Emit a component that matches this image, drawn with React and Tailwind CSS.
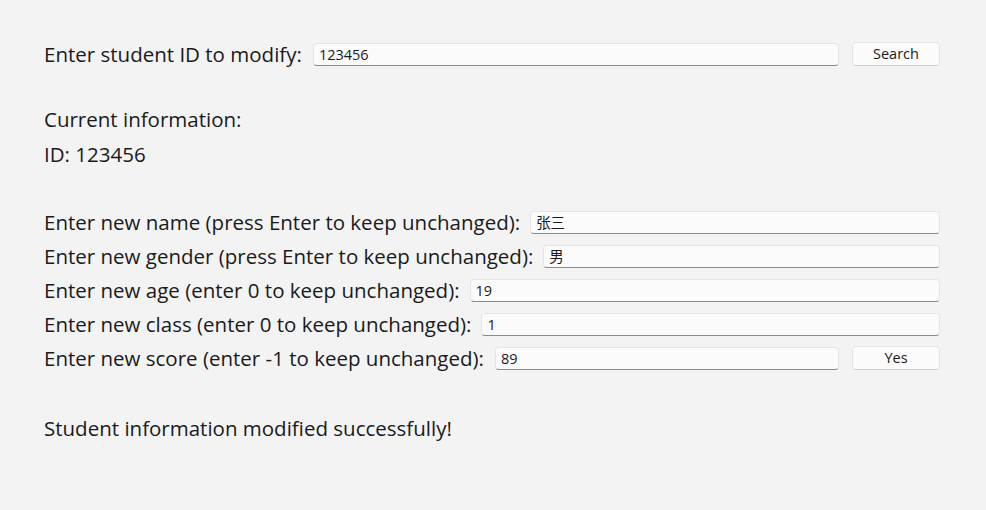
export default function App() {
  const rows = [
    { label: "Enter new name (press Enter to keep unchanged):", value: "张三" },
    { label: "Enter new gender (press Enter to keep unchanged):", value: "男" },
    { label: "Enter new age (enter 0 to keep unchanged):", value: "19" },
    { label: "Enter new class (enter 0 to keep unchanged):", value: "1" },
  ];

  const inputCls =
    "h-[23px] flex-1 rounded-[4px] border border-[#e5e5e5] border-b-[#8a8a8a] bg-[#fbfbfb] px-[5px] text-[14.5px] leading-[21px] text-[#1a1a1a]";
  const btnCls =
    "h-[24px] w-[88px] rounded-[4px] border border-[#e5e5e5] border-b-[#d0d0d0] bg-[#fbfbfb] text-[14.5px] text-[#1a1a1a]";

  return (
    <div
      className="h-[510px] w-[986px] bg-[#f3f3f3] pl-[44px] pr-[46px] pt-[42px] text-[#1a1a1a]"
      style={{ fontFamily: '"Open Sans", "Noto Sans CJK SC", sans-serif' }}
    >
      <div className="flex items-center">
        <span className="text-[20.5px] leading-[24px]">Enter student ID to modify:</span>
        <div className="ml-[11px] flex flex-1 items-center">
          <div className={inputCls}>123456</div>
          <button className={`ml-[13px] ${btnCls}`}>Search</button>
        </div>
      </div>

      <div className="mt-[36px] text-[20.5px] leading-[35px]">Current information:</div>
      <div className="text-[20.5px] leading-[35px]">ID: 123456</div>

      <div className="mt-[38px] flex flex-col gap-[10px]">
        {rows.map((r) => (
          <div key={r.label} className="flex items-center">
            <span className="text-[20.5px] leading-[24px]">{r.label}</span>
            <div className={`ml-[10px] ${inputCls}`}>{r.value}</div>
          </div>
        ))}
        <div className="flex items-center">
          <span className="text-[20.5px] leading-[24px]">Enter new score (enter -1 to keep unchanged):</span>
          <div className={`ml-[11px] ${inputCls}`}>89</div>
          <button className={`ml-[13px] ${btnCls}`}>Yes</button>
        </div>
      </div>

      <div className="mt-[46px] text-[20.5px] leading-[24px]">Student information modified successfully!</div>
    </div>
  );
}
